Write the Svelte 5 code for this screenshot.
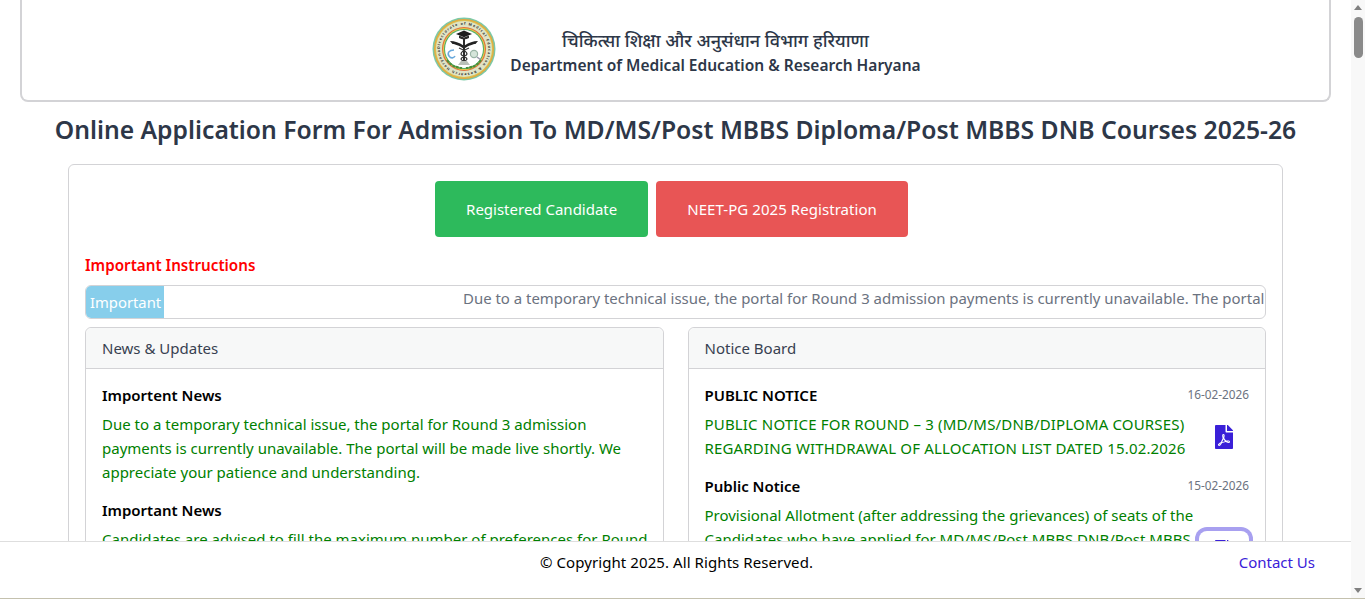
<script>
  const pdf = "M181.9 256.1c-5-16-4.9-46.9-2-46.9 8.4 0 7.6 36.9 2 46.9zm-1.7 47.2c-7.7 20.2-17.3 43.3-28.4 62.7 18.3-7 39-17.2 62.9-21.9-12.7-9.6-24.9-23.4-34.5-40.8zM86.1 428.1c0 .8 13.2-5.4 34.9-40.2-6.7 6.3-29.1 24.5-34.9 40.2zM248 160h136v328c0 13.3-10.7 24-24 24H24c-13.3 0-24-10.7-24-24V24C0 10.7 10.7 0 24 0h200v136c0 13.2 10.8 24 24 24zm-8 171.8c-20-12.2-33.3-29-42.7-53.8 4.5-18.5 11.6-46.6 6.2-64.2-4.7-29.4-42.4-26.5-47.8-6.8-5 18.3-.4 44.1 8.1 77-11.6 27.6-28.7 64.6-40.8 85.8-.1 0-.1.1-.2.1-27.1 13.9-73.6 44.5-54.5 68 5.6 6.9 16 10 21.5 10 17.9 0 35.7-18 61.1-61.8 25.8-8.5 54.1-19.1 79-23.2 21.7 11.8 47.1 19.5 64 19.5 29.2 0 31.2-32 19.7-43.4-13.9-13.6-54.3-9.7-73.6-7.2zM377 105L279 7c-4.5-4.5-10.6-7-17-7h-6v128h128v-6.1c0-6.3-2.5-12.4-7-16.9zm-74.1 255.3c4.1-2.7-2.5-11.9-42.8-9 37.1 15.8 42.8 9 42.8 9z";
</script>

<div class="window">
  <div class="viewport">
    <main class="page">
      <header class="brand">
        <svg class="logo" viewBox="0 0 64 64" aria-hidden="true">
          <defs><path id="ring" d="M32 32m-24.2 0a24.2 24.2 0 1 1 48.4 0a24.2 24.2 0 1 1 -48.4 0" /></defs>
          <circle cx="32" cy="32" r="31.5" fill="#7cc9a6" />
          <circle cx="32" cy="32" r="30" fill="#e7a63e" />
          <circle cx="32" cy="32" r="29" fill="#d9c24f" />
          <circle cx="32" cy="32" r="28" fill="#dfe3c4" />
          <circle cx="32" cy="32" r="22" fill="#e0703a" />
          <circle cx="32" cy="32" r="21" fill="#e7c84a" />
          <circle cx="32" cy="32" r="20" fill="#4fae6a" />
          <circle cx="32" cy="32" r="19" fill="#fff" />
          <text class="ringtext"><textPath href="#ring" textLength="150">Directorate of Medical Education &amp; Research Haryana</textPath></text>
          <path d="M32 13.5l-8 3.4 8 3.4 8-3.4z" fill="#1d1d1d" />
          <path d="M27 18.5v2.6c3 1.8 7 1.8 10 0v-2.6l-5 2z" fill="#2b2b2b" />
          <path d="M31 21h2v23h-2z" fill="#2b2b2b" />
          <path d="M18 24c5 0 9 1.500 13.500 4.500v3c-4-3-9-4.500-11-4.500zM46 24c-5 0-9 1.500-13.500 4.500v3c4-3 9-4.500 11-4.500z" fill="#222" />
          <path d="M27 31c5 2 8 4 8 6s-6 3-6 5 5 2 5 4M37 31c-5 2-8 4-8 6s6 3 6 5-5 2-5 4" fill="none" stroke="#333" stroke-width="1.300" />
          <path d="M22 33c-5 0-7 3-5 6s5 2 6 0" fill="none" stroke="#6aa9dc" stroke-width="1.600" />
          <circle cx="42" cy="37" r="3.600" fill="#d5e5da" stroke="#9ab5a6" stroke-width="1.200" />
          <path d="M45 40l4 3" stroke="#99a" stroke-width="1.500" />
          <path d="M29 44h6l3 4H26z" fill="#b9c0b8" />
          <path d="M15 43c4 6 9 7.500 15 8M49 43c-4 6-9 7.500-15 8" fill="none" stroke="#4c8f3a" stroke-width="2.200" stroke-dasharray="3 .8" />
        </svg>
        <div class="names">
          <div class="hindi">चिकित्सा शिक्षा और अनुसंधान विभाग हरियाणा</div>
          <div class="english">Department of Medical Education &amp; Research Haryana</div>
        </div>
      </header>

      <h1>Online Application Form For Admission To MD/MS/Post MBBS Diploma/Post MBBS DNB Courses 2025-26</h1>

      <section class="panel">
        <div class="actions">
          <button class="btn green">Registered Candidate</button>
          <button class="btn red">NEET-PG 2025 Registration</button>
        </div>

        <h2>Important Instructions</h2>

        <div class="ticker">
          <span class="tag">Important</span>
          <div class="running"><span>Due to a temporary technical issue, the portal for Round 3 admission payments is currently unavailable. The portal will be made live shortly.</span></div>
        </div>

        <div class="columns">
          <article class="card">
            <div class="card-head">News &amp; Updates</div>
            <div class="card-body news">
              <div class="item">
                <h3>Importent News</h3>
                <p>Due to a temporary technical issue, the portal for Round 3 admission payments is currently unavailable. The portal will be made live shortly. We appreciate your patience and understanding.</p>
              </div>
              <div class="item">
                <h3>Important News</h3>
                <p>Candidates are advised to fill the maximum number of preferences for Round 3 of the counselling.</p>
              </div>
            </div>
          </article>

          <article class="card">
            <div class="card-head">Notice Board</div>
            <div class="card-body">
              <div class="item">
                <div class="row"><h3>PUBLIC NOTICE</h3><time>16-02-2026</time></div>
                <div class="row">
                  <p class="caps">PUBLIC NOTICE FOR ROUND – 3 (MD/MS/DNB/DIPLOMA COURSES) REGARDING WITHDRAWAL OF ALLOCATION LIST DATED 15.02.2026</p>
                  <span class="doc"><svg viewBox="0 0 384 512"><path d={pdf} /></svg></span>
                </div>
              </div>
              <div class="item">
                <div class="row"><h3>Public Notice</h3><time>15-02-2026</time></div>
                <div class="row">
                  <p>Provisional Allotment (after addressing the grievances) of seats of the Candidates who have applied for MD/MS/Post MBBS DNB/Post MBBS Diploma courses for Round 3 of the counselling session 2025-26 is hereby published for the information of all candidates.</p>
                  <span class="doc focus"><svg viewBox="0 0 384 512"><path d={pdf} /></svg></span>
                </div>
              </div>
            </div>
          </article>
        </div>
      </section>
    </main>

    <footer class="foot">
      <span class="copy">© Copyright 2025. All Rights Reserved.</span>
      <a href="#contact">Contact Us</a>
    </footer>
  </div>

  <div class="scrollbar" aria-hidden="true">
    <i class="up"></i>
    <i class="thumb"></i>
    <i class="down"></i>
  </div>
</div>

<style>
  :global(body) { margin: 0; background: #fff; overflow: hidden; }
  .window {
    display: flex; height: 598px; overflow: hidden;
    border-bottom: 1px solid #c4c1ae;
    font-family: "Noto Sans", "Open Sans", sans-serif;
    font-size: 15px; line-height: 24px; color: #000;
  }
  .viewport { flex: 1; min-width: 0; display: flex; flex-direction: column; }
  .page { height: 541px; overflow: hidden; flex: none; }
  .brand {
    margin: 0 20px; height: 100px;
    border: 2px solid #d3d3d6; border-top: 0; border-radius: 0 0 8px 8px;
    display: flex; align-items: center; justify-content: center; gap: 14px;
    padding-left: 2px; box-sizing: content-box;
  }
  .logo { width: 64px; height: 64px; flex: none; margin-top: -3px; }
  .ringtext { font-size: 3.6px; fill: #2f2f2f; font-weight: 700; }
  .names { text-align: center; color: #2d3748; font-weight: 600; padding-top: 4px; }
  .hindi { font-family: "Noto Sans", "DejaVu Sans", sans-serif; font-size: 18px; line-height: 26px; font-weight: 500; }
  .english { font-size: 15.5px; line-height: 24px; }
  h1 { margin: 12px 0 18px; text-align: center; font-size: 24.7px; line-height: 32px; font-weight: 600; color: #2d3748; }
  .panel {
    margin: 0 68px; padding: 16px; min-height: 500px;
    border: 1px solid #d3d3d6; border-radius: 6px;
  }
  .actions { display: flex; justify-content: center; gap: 8px; padding-right: 8px; }
  .btn {
    height: 56px; padding: 0 31px; border: 0; border-radius: 4px; color: #fff;
    font: inherit;
  }
  .green { background: #2dba5c; }
  .red { background: #e85555; letter-spacing: .06px; }
  h2 { margin: 16px 0 8px; font-size: 15.2px; line-height: 24px; font-weight: 600; color: #f00; }
  .ticker {
    display: flex; height: 34px; box-sizing: border-box;
    border: 1px solid #d3d3d6; border-radius: 6px; overflow: hidden;
  }
  .tag { flex: none; width: 79px; background: #87ceeb; color: #fff; padding-left: 5px; box-sizing: border-box; line-height: 34px; margin: -1px 0 -1px -1px; font-size: 14.8px; }
  .running { flex: 1; overflow: hidden; white-space: nowrap; padding-left: 299px; color: #6b7280; line-height: 24px; font-size: 14.95px; }
  .columns { display: grid; grid-template-columns: 1fr 1fr; gap: 24px; margin-top: 8px; }
  .card { border: 1px solid #d3d3d6; border-radius: 6px; }
  .card-head { height: 40px; line-height: 40px; padding: 0 16px; background: #f7f8f8; border-bottom: 1px solid #d3d3d6; color: #374151; border-radius: 6px 6px 0 0; }
  .card-body { padding: 14px 16px 16px; }
  .news { padding-right: 12px; }
  .item { margin-bottom: 14px; }
  h3 { margin: 0; font-size: 15px; line-height: 24px; font-weight: 600; color: #000; }
  p { margin: 5px 0 0; color: #008000; }
  .caps { letter-spacing: .17px; }
  .row { display: flex; justify-content: space-between; align-items: center; gap: 4px; }
  time { font-size: 11.8px; line-height: 22px; margin-bottom: 2px; color: #6b7280; }
  .doc { flex: none; width: 50px; margin-top: 5px; display: flex; justify-content: center; padding: 9px 0 7px; box-sizing: border-box; }
  .doc svg { width: 18px; height: 24px; fill: #3a20d8; }
  .focus { box-shadow: 0 0 0 4px #a8a0f0; border-radius: 8px; }
  .foot {
    flex: 1; border-top: 1px solid #dedede; display: flex; background: #fff;
    align-items: flex-start; justify-content: space-between;
    padding: 8px 36px 0 540px;
  }
  .copy { letter-spacing: .08px; }
  a { color: #3a20d8; text-decoration: none; }
  .scrollbar { flex: none; width: 14px; background: #f8f8f8; position: relative; }
  .scrollbar i { position: absolute; display: block; }
  .up { left: 3px; top: 5px; border: 4px solid transparent; border-top: 0; border-bottom: 5px solid #808080; }
  .down { left: 3px; bottom: 5px; border: 4px solid transparent; border-bottom: 0; border-top: 5px solid #808080; }
  .thumb { left: 3px; top: 17px; width: 9px; height: 41px; background: #8a8a8a; border-radius: 5px; }
</style>
